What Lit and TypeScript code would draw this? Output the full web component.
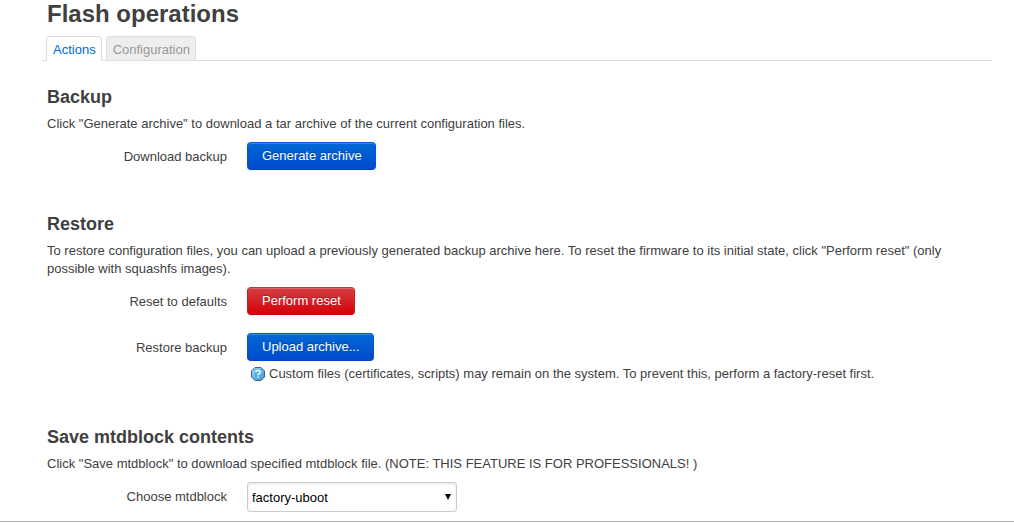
import { LitElement, html, css } from "lit";
import { customElement } from "lit/decorators.js";

@customElement("app-root")
class AppRoot extends LitElement {
  static styles = css`
    :host {
      display: block;
      box-sizing: border-box;
      font: 13px/18px "Liberation Sans", Arial, sans-serif;
      color: #404040;
      background: #fff;
      border-bottom: 1px solid #b0b0b0;
      padding: 0 22px 9px 42px;
    }
    h2, h3, p { margin: 0; }
    h2 { font-size: 24px; line-height: 28px; padding-left: 5px; }
    h3 { font-size: 18px; line-height: 36px; }
    .tabs { display: flex; gap: 4px; margin-top: 8px; padding-left: 4px; border-bottom: 1px solid #ddd; }
    .tab {
      box-sizing: border-box;
      height: 24px;
      padding: 0 5px 0 6px;
      border: 1px solid #ddd;
      border-bottom: 0;
      border-radius: 4px 4px 0 0;
      line-height: 26px;
      text-decoration: none;
      color: #999;
      background: #eee;
    }
    .active { height: 25px; margin-bottom: -1px; color: #0069d6; background: #fff; }
    section { padding: 0 5px; margin-top: 18px; }
    section + section { margin-top: 36px; }
    .row { display: grid; grid-template-columns: 180px 1fr; column-gap: 20px; margin-top: 9px; }
    .row + .row { margin-top: 18px; }
    .label { text-align: right; line-height: 26px; padding-top: 2px; }
    button {
      display: block;
      box-sizing: border-box;
      height: 28px;
      padding: 0 13px 0 14px;
      font: inherit;
      color: #fff;
      border: 1px solid;
      border-radius: 4px;
      text-shadow: 0 -1px 0 rgba(0, 0, 0, 0.25);
      box-shadow: inset 0 1px 0 rgba(255, 255, 255, 0.2), 0 1px 2px rgba(0, 0, 0, 0.05);
    }
    .primary { background: linear-gradient(#0069d6, #0049cc); border-color: #0060d0 #0054cc #0046c4; }
    .danger { background: linear-gradient(#d33f44, #d60008); border-color: #cf3338 #cc1c22 #c60008; }
    .hint { display: flex; align-items: center; gap: 4px; padding: 4px 0 0 4px; }
    .hint svg { flex: none; }
    .pick { position: relative; width: 210px; }
    select {
      display: block;
      appearance: none;
      box-sizing: border-box;
      width: 100%;
      height: 30px;
      padding: 2px 20px 0 4px;
      font: inherit;
      color: #000;
      background: #fff;
      border: 1px solid #ccc;
      border-radius: 3px;
      box-shadow: inset 0 1px 3px rgba(0, 0, 0, 0.1);
    }
    .pick svg { position: absolute; right: 6px; top: 12px; pointer-events: none; }
  `;

  render() {
    return html`
      <h2>Flash operations</h2>
      <nav class="tabs">
        <a class="tab active" href="#actions">Actions</a>
        <a class="tab" href="#configuration">Configuration</a>
      </nav>
      <section>
        <h3>Backup</h3>
        <p>Click "Generate archive" to download a tar archive of the current configuration files.</p>
        <div class="row">
          <label class="label" for="generate">Download backup</label>
          <div><button id="generate" class="primary">Generate archive</button></div>
        </div>
      </section>
      <section>
        <h3>Restore</h3>
        <p>To restore configuration files, you can upload a previously generated backup archive here. To reset the firmware to its initial state, click "Perform reset" (only possible with squashfs images).</p>
        <div class="row">
          <label class="label" for="reset">Reset to defaults</label>
          <div><button id="reset" class="danger">Perform reset</button></div>
        </div>
        <div class="row">
          <label class="label" for="upload">Restore backup</label>
          <div>
            <button id="upload" class="primary">Upload archive...</button>
            <div class="hint">
              <svg width="14" height="14" viewBox="0 0 14 14" aria-hidden="true">
                <defs>
                  <linearGradient id="sky" x1="0" y1="0" x2="1" y2="1">
                    <stop offset="0" stop-color="#a8def8" />
                    <stop offset="1" stop-color="#2f93d8" />
                  </linearGradient>
                </defs>
                <path d="M4 .5h6L13.500 4v6L10 13.500H4L.5 10V4Z" fill="url(#sky)" stroke="#3a6384"/>
                <path d="M3.500 2.500h7v9h-7Z" fill="#55aee2"/>
                <path d="M4.800 5.300C4.800 3 9.200 3 9.200 5.300C9.200 6.700 7 6.700 7 8.300M7 9.400v1.400" fill="none" stroke="#fff" stroke-width="1.500"/>
              </svg>
              <span>Custom files (certificates, scripts) may remain on the system. To prevent this, perform a factory-reset first.</span>
            </div>
          </div>
        </div>
      </section>
      <section>
        <h3>Save mtdblock contents</h3>
        <p>Click "Save mtdblock" to download specified mtdblock file. (NOTE: THIS FEATURE IS FOR PROFESSIONALS! )</p>
        <div class="row">
          <label class="label" for="block">Choose mtdblock</label>
          <div class="pick">
            <select id="block"><option>factory-uboot</option></select>
            <svg width="6" height="6" viewBox="0 0 6 6" aria-hidden="true"><path d="M0 0h6L3 6Z" fill="#000"/></svg>
          </div>
        </div>
      </section>
    `;
  }
}
